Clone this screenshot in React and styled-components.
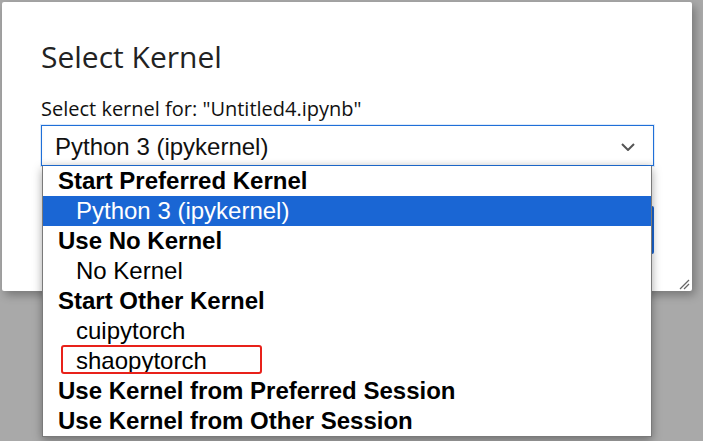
import styled, { createGlobalStyle } from "styled-components";

const GlobalStyle = createGlobalStyle`
  html, body {
    margin: 0;
    padding: 0;
    background: #a9a9a9;
    overflow: hidden;
  }
`;

const Page = styled.div`
  width: 703px;
  height: 441px;
  padding: 2px 0 0 2px;
  box-sizing: border-box;
`;

const Dialog = styled.div`
  position: relative;
  width: 690px;
  height: 289px;
  box-sizing: border-box;
  padding: 35px 38px 0 39px;
  background: #fff;
  border-radius: 2px;
  box-shadow: 3px 4px 10px rgba(0, 0, 0, 0.3);
`;

const Title = styled.h1`
  margin: 0;
  font-family: "Segoe UI", "Open Sans", sans-serif;
  font-weight: 400;
  font-size: 30px;
  line-height: 40px;
  color: #222;
`;

const Label = styled.div`
  margin-top: 20px;
  font-family: "Segoe UI", "Open Sans", sans-serif;
  font-size: 20px;
  line-height: 24px;
  color: #111;
`;

const SelectWrap = styled.div`
  position: relative;
  margin-top: 4px;
`;

const SelectBox = styled.div`
  display: flex;
  align-items: center;
  justify-content: space-between;
  height: 41px;
  box-sizing: border-box;
  padding: 2px 18px 0 13px;
  border: 1px solid #1f6fd8;
  box-shadow: 0 0 0 1px rgba(31, 111, 216, 0.15), inset 0 -3px 4px rgba(0, 0, 0, 0.05);
  font-family: "Liberation Sans", Arial, sans-serif;
  font-size: 24px;
  color: #111;
`;

const Menu = styled.ul`
  position: absolute;
  z-index: 2;
  top: 41px;
  left: 1px;
  width: 610px;
  box-sizing: border-box;
  margin: 0;
  padding: 0;
  list-style: none;
  background: #fff;
  border: 1px solid #7a7a7a;
  border-top: none;
  box-shadow: 0 3px 9px rgba(0, 0, 0, 0.35);
  font-family: "Liberation Sans", Arial, sans-serif;
  font-size: 24px;
`;

const Row = styled.li`
  position: relative;
  height: 30px;
  line-height: 30px;
  white-space: nowrap;
  padding-left: ${({ $group }) => ($group ? "15px" : "33px")};
  font-weight: ${({ $group }) => ($group ? 700 : 400)};
  color: ${({ $active }) => ($active ? "#fff" : "#000")};
  background: ${({ $active }) => ($active ? "#1a66d4" : "transparent")};
`;

const Mark = styled.span`
  position: absolute;
  left: 18px;
  top: -1px;
  width: 201px;
  height: 29px;
  box-sizing: border-box;
  border: 2px solid #e8211a;
  border-radius: 3px;
`;

const Footer = styled.div`
  display: flex;
  justify-content: flex-end;
  gap: 12px;
  margin-top: 40px;
`;

const Button = styled.button`
  height: 48px;
  min-width: 110px;
  border: none;
  border-radius: 2px;
  font-family: "Segoe UI", "Open Sans", sans-serif;
  font-size: 18px;
  color: ${({ $primary }) => ($primary ? "#fff" : "#222")};
  background: ${({ $primary }) => ($primary ? "#1a66d4" : "#e0e0e0")};
`;

const Grip = styled.svg`
  position: absolute;
  right: 2px;
  bottom: 1px;
`;

const rows = [
  { text: "Start Preferred Kernel", group: true },
  { text: "Python 3 (ipykernel)", active: true },
  { text: "Use No Kernel", group: true },
  { text: "No Kernel" },
  { text: "Start Other Kernel", group: true },
  { text: "cuipytorch" },
  { text: "shaopytorch", marked: true },
  { text: "Use Kernel from Preferred Session", group: true },
  { text: "Use Kernel from Other Session", group: true },
];

export default function App() {
  return (
    <>
      <GlobalStyle />
      <Page>
        <Dialog>
          <Title>Select Kernel</Title>
          <Label>Select kernel for: "Untitled4.ipynb"</Label>
          <SelectWrap>
            <SelectBox>
              <span>Python 3 (ipykernel)</span>
              <svg width="14" height="8" viewBox="0 0 14 8">
                <polyline points="1,1 7,7 13,1" fill="none" stroke="#555" strokeWidth="2" />
              </svg>
            </SelectBox>
            <Menu>
              {rows.map((r) => (
                <Row key={r.text} $group={r.group} $active={r.active}>
                  {r.marked && <Mark />}
                  {r.text}
                </Row>
              ))}
            </Menu>
          </SelectWrap>
          <Footer>
            <Button>Cancel</Button>
            <Button $primary>Select</Button>
          </Footer>
          <Grip width="11" height="11" viewBox="0 0 11 11">
            <line x1="1" y1="10" x2="10" y2="1" stroke="#666" strokeWidth="1.3" />
            <line x1="5" y1="10" x2="10" y2="5" stroke="#666" strokeWidth="1.3" />
          </Grip>
        </Dialog>
      </Page>
    </>
  );
}
